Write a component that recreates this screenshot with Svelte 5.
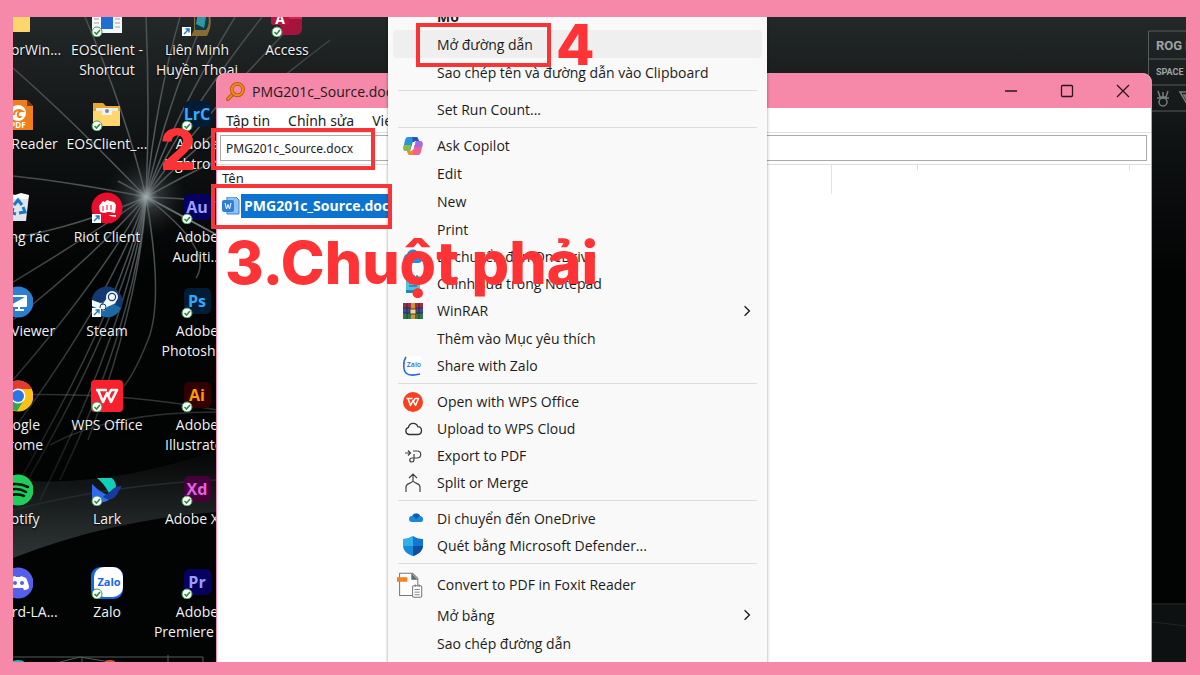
<script>
  const shortcuts = [
    { icon: 'folder', lines: ['MonitorWin...'] },
    { icon: 'page', lines: ['EOSClient -', 'Shortcut'], badge: 'check' },
    { icon: 'league', lines: ['Liên Minh', 'Huyền Thoại'], badge: 'arrow' },
    { icon: 'access', lines: ['Access'], badge: 'check' },
    { icon: 'foxit', lines: ['Foxit Reader'] },
    { icon: 'folderFile', lines: ['EOSClient_...'], badge: 'check' },
    { icon: 'adobe', text: 'LrC', bg: '#001d35', fg: '#3fa9ff', lines: ['Adobe', 'Lightroo...'], badge: 'check' },
    null,
    { icon: 'bin', lines: ['Thùng rác'] },
    { icon: 'riot', lines: ['Riot Client'], badge: 'arrow' },
    { icon: 'adobe', text: 'Au', bg: '#06005e', fg: '#9c9cff', lines: ['Adobe', 'Auditi...'], badge: 'check' },
    null,
    { icon: 'viewer', lines: ['UltraViewer'] },
    { icon: 'steam', lines: ['Steam'], badge: 'arrow' },
    { icon: 'adobe', text: 'Ps', bg: '#001d35', fg: '#31a8ff', lines: ['Adobe', 'Photoshop'], badge: 'check' },
    null,
    { icon: 'chrome', lines: ['Google', 'Chrome'] },
    { icon: 'wps', lines: ['WPS Office'], badge: 'check' },
    { icon: 'adobe', text: 'Ai', bg: '#320000', fg: '#ff9a00', lines: ['Adobe', 'Illustrator'], badge: 'check' },
    null,
    { icon: 'spotify', lines: ['Spotify'] },
    { icon: 'lark', lines: ['Lark'], badge: 'check' },
    { icon: 'adobe', text: 'Xd', bg: '#45023a', fg: '#ea5de8', lines: ['Adobe XD'], badge: 'check' },
    null,
    { icon: 'discord', lines: ['Discord-LA...'] },
    { icon: 'zalo', lines: ['Zalo'], badge: 'check' },
    { icon: 'adobe', text: 'Pr', bg: '#06005e', fg: '#9c9cff', lines: ['Adobe', 'Premiere Pro'], badge: 'check' },
    null
  ];

  const menu = [
    [
      { label: 'Mở', bold: true },
      { label: 'Mở đường dẫn', active: true },
      { label: 'Sao chép tên và đường dẫn vào Clipboard' }
    ],
    [{ label: 'Set Run Count...' }],
    [
      { label: 'Ask Copilot', icon: 'copilot' },
      { label: 'Edit' },
      { label: 'New' },
      { label: 'Print' },
      { label: 'Di chuyển đến OneDrive', icon: 'onedrive' },
      { label: 'Chỉnh sửa trong Notepad', icon: 'notepad' },
      { label: 'WinRAR', icon: 'winrar', more: true },
      { label: 'Thêm vào Mục yêu thích' },
      { label: 'Share with Zalo', icon: 'zaloShare' }
    ],
    [
      { label: 'Open with WPS Office', icon: 'wpsRound' },
      { label: 'Upload to WPS Cloud', icon: 'cloud' },
      { label: 'Export to PDF', icon: 'export' },
      { label: 'Split or Merge', icon: 'split' }
    ],
    [
      { label: 'Di chuyển đến OneDrive', icon: 'drive' },
      { label: 'Quét bằng Microsoft Defender...', icon: 'shield' }
    ],
    [
      { label: 'Convert to PDF in Foxit Reader', icon: 'convert', tall: true },
      { label: 'Mở bằng', more: true },
      { label: 'Sao chép đường dẫn' }
    ]
  ];

  const rays = [
    [13, 68, 70, 118], [13, 176, 70, 182], [13, 238, 80, 226], [13, 282, 80, 242],
    [13, 320, 90, 260], [13, 380, 100, 280], [13, 430, 110, 300], [20, 480, 118, 310],
    [13, 505, 124, 320], [40, 500, 130, 320], [60, 480, 136, 320], [88, 440, 140, 300],
    [85, 17, 125, 110], [146, 17, 150, 110], [180, 17, 156, 100], [205, 17, 165, 110],
    [235, 17, 172, 120], [262, 17, 178, 125], [300, 17, 190, 130], [330, 40, 200, 140],
    [217, 160, 180, 178], [217, 202, 180, 198], [217, 235, 180, 215]
  ];

  let query = $state('PMG201c_Source.docx');
</script>

{#snippet picture(s)}
  <svg class="pic" viewBox="0 0 32 32" aria-hidden="true">
    {#if s.icon === 'adobe'}
      <rect x="3" y="2" width="27" height="26" rx="5" fill={s.bg} />
      <text x="16" y="21" text-anchor="middle" font-family="Open Sans, sans-serif" font-weight="700" font-size="16" fill={s.fg}>{s.text}</text>
    {:else if s.icon === 'folder' || s.icon === 'folderFile'}
      <path d="M2 4h10l3 3h14v20H2z" fill="#e5a92c" />
      {#if s.icon === 'folderFile'}
        <path d="M5 9h22v6H5z" fill="#e9eef2" />
      {/if}
      <path d="M2 12h27v13a2 2 0 0 1-2 2H4a2 2 0 0 1-2-2z" fill="#ffd66e" />
      {#if s.icon === 'folderFile'}<path d="M11 9h10v7H11z" fill="#eef1f3" /><circle cx="16" cy="12" r="2" fill="#7b8c9b" />{/if}
    {:else if s.icon === 'page'}
      <path d="M1 2h30v26H1z" fill="#f4f6f8" />
      <path d="M10 2h12v22H10z" fill="#1f6fd0" />
      <path d="M3 14h5M3 18h5M24 14h5M24 18h5M24 22h5" stroke="#9aa4ae" />
    {:else if s.icon === 'league'}
      <path d="M3 2h20c9 6 8 20 3 29H10l3-6V6z" fill="#8a6a35" />
      <path d="M14 4h9c6 6 6 15 2 21H14z" fill="#0c3a46" />
      <path d="M17 8l8 4-2 11-8-4z" fill="#2e9aa0" />
    {:else if s.icon === 'access'}
      <path d="M8 0h23v24a6 6 0 0 1-6 6H10z" fill="#a4143c" />
      <path d="M12 0h19v14H12z" fill="#d0254f" />
      <rect x="0" y="3" width="18" height="17" rx="2" fill="#b3173f" />
      <text x="9" y="19" text-anchor="middle" font-family="Open Sans, sans-serif" font-weight="700" font-size="14" fill="#fff">A</text>
    {:else if s.icon === 'foxit'}
      <path d="M0 1h26l6 6v24H0z" fill="#f07f1b" />
      <path d="M26 1v6h6z" fill="#7b3b0c" />
      <circle cx="17" cy="14" r="8" fill="#fff" />
      <path d="M13 16c0-5 5-6 8-4-3 0-5 2-4 5 1 2 3 1 3 0" fill="none" stroke="#f07f1b" stroke-width="2" />
      <text x="17" y="29" text-anchor="middle" font-family="Open Sans, sans-serif" font-weight="700" font-size="8" fill="#fff">PDF</text>
    {:else if s.icon === 'bin'}
      <path d="M3 3h25l-3 26H6z" fill="#dfe6ea" />
      <path d="M3 3l6-2 5 2 6-2 8 2-1 4H4z" fill="#fbfdfe" />
      <path d="M13 13l4-5 4 5M22 15l2 5-6 1M15 22l-4-1 1-5" fill="none" stroke="#1878c9" stroke-width="3" />
    {:else if s.icon === 'riot'}
      <circle cx="16" cy="16" r="15.500" fill="#e90f2c" />
      <path d="M8 14l4-5 2 1 2-2 3 1 4 1 2 3-1 8-5-1h-2l-4 1-4-1zM18 23l7 0v2l-6-1z" fill="#fff" />
      <path d="M12 14v5M16 13v5M20 13v5" stroke="#e90f2c" />
    {:else if s.icon === 'viewer'}
      <circle cx="17" cy="16" r="15.500" fill="#2c7ed3" />
      <rect x="8" y="9" width="18" height="12" rx="1" fill="#fff" />
      <path d="M10 11h14l-14 8z" fill="#2c7ed3" />
      <path d="M14 24h9M18 21v3" stroke="#fff" stroke-width="2" />
    {:else if s.icon === 'steam'}
      <circle cx="16" cy="16" r="15.500" fill="#123a70" />
      <path d="M1 20a15.500 15.500 0 0 0 29 2L16 14z" fill="#1c6aa4" />
      <path d="M1 14l11 4 5-8 8 7-9 4-3 4-12-5z" fill="#f5f8fa" />
      <circle cx="21" cy="11" r="6" fill="#f5f8fa" /><circle cx="21" cy="11" r="4.200" fill="#123a70" /><circle cx="21" cy="11" r="3" fill="#f5f8fa" />
      <circle cx="12" cy="21" r="3" fill="none" stroke="#123a70" />
    {:else if s.icon === 'chrome'}
      <circle cx="17" cy="16" r="15.500" fill="#fbc116" />
      <path d="M17 16L4 8A15.500 15.500 0 0 1 31 9H17z" fill="#e33b2e" />
      <path d="M4 8a15.500 15.500 0 0 0 12 23l7-11-12-1z" fill="#2da94f" />
      <circle cx="17" cy="16" r="7.500" fill="#fff" /><circle cx="17" cy="16" r="6" fill="#2a74e6" />
    {:else if s.icon === 'wps'}
      <rect x="0" y="0" width="32" height="32" rx="4" fill="#f8202c" />
      <path d="M5 10h11M7 10l5 12 4-9 4 9 6-12h-6l-3 6" fill="none" stroke="#fff" stroke-width="2.600" stroke-linejoin="round" />
    {:else if s.icon === 'spotify'}
      <circle cx="17" cy="16" r="15.500" fill="#1ed05b" />
      <path d="M8 11c7-2 13-1 19 2M9 16c6-2 11-1 16 2M10 21c5-1 9-1 13 1" fill="none" stroke="#0b1a10" stroke-width="2.600" stroke-linecap="round" />
    {:else if s.icon === 'lark'}
      <path d="M6 4h15c3 3 4 6 4 9l-7 6C15 13 11 8 6 4z" fill="#10cfb8" />
      <path d="M1 10c7 7 13 11 20 12-5 8-14 8-20 3z" fill="#2f6bf2" />
      <path d="M14 21c5-1 7-9 17-9-4 5-4 10-10 13-3 1-6 0-9-2z" fill="#173a9c" />
    {:else if s.icon === 'discord'}
      <circle cx="17" cy="16" r="15.500" fill="#5560ea" />
      <path d="M9 11l5-2 1 1h4l1-1 5 2c2 4 3 7 3 10-2 2-4 2-5 2l-1-2h-10l-1 2c-1 0-3 0-5-2 0-3 1-6 3-10z" fill="#fff" />
      <circle cx="14" cy="16" r="2" fill="#5560ea" /><circle cx="21" cy="16" r="2" fill="#5560ea" />
    {:else if s.icon === 'zalo'}
      <rect x="0" y="0" width="32" height="32" rx="9" fill="#1566ee" />
      <rect x="3" y="0" width="29" height="30" rx="10" fill="#fff" />
      <text x="18" y="19" text-anchor="middle" font-family="Open Sans, sans-serif" font-weight="700" font-size="11" fill="#1566ee">Zalo</text>
    {/if}
    {#if s.badge === 'check'}
      <circle cx="6" cy="27" r="5" fill="#fff" stroke="#3b9b50" />
      <path d="M3.500 27l2 2 3.500-4" fill="none" stroke="#2c8d41" stroke-width="1.600" />
    {:else if s.badge === 'arrow'}
      <rect x="1" y="22" width="9" height="9" fill="#fff" />
      <path d="M3 29l5-5M4.500 24H8v3.500" fill="none" stroke="#1677c8" stroke-width="1.400" />
    {/if}
  </svg>
{/snippet}

{#snippet glyph(name)}
  <svg class="glyph" class:big={name === 'convert'} viewBox="0 0 20 20" aria-hidden="true">
    {#if name === 'copilot'}
      <path d="M5 1h8c2 0 2 2 3 4h-4c-2 0-2 1-3 4l-2 6H3c-3 0-3-3-2-6l1-5c1-2 1-3 3-3z" fill="#2795db" />
      <path d="M1 9h7l-1 6H3c-3 0-3-3-2-6z" fill="#8dbb3d" />
      <path d="M15 19H7c-2 0-2-2-3-4h4c2 0 2-1 3-4l2-6h4c3 0 3 3 2 6l-1 5c-1 2-1 3-3 3z" fill="#ee6397" />
      <path d="M13 5h4c3 0 3 3 2 6h-8z" fill="#a46ae4" />
      <path d="M4 15h4c1 0 2-1 2-2v6H7c-2 0-2-2-3-4z" fill="#f38936" />
      <path d="M9 1h4c2 0 2 2 3 4h-4l-2 2z" fill="#2355c4" />
      <path d="M10 6h2l-2 8H8z" fill="#fff" />
    {:else if name === 'onedrive'}
      <path d="M3 16a5 5 0 0 1 1-9c2-6 10-6 12 0 5 1 5 8 0 9z" fill="#1c8fe8" />
    {:else if name === 'notepad'}
      <rect x="3" y="2" width="14" height="17" rx="1" fill="#50c0e4" />
      <path d="M3 16h14v3H3z" fill="#2388b4" /><path d="M6 9h8M6 12h8" stroke="#155a80" /><path d="M5 1v3M8 1v3M11 1v3M14 1v3" stroke="#34495a" />
    {:else if name === 'winrar'}
      <path d="M0 2h20v5H0z" fill="#973044" /><path d="M0 7h20v5H0z" fill="#3a4aa5" /><path d="M0 12h20v6H0z" fill="#2d7b48" />
      <path d="M8 2h4v16H8z" fill="#d89232" /><rect x="7" y="8" width="6" height="5" fill="#e8d9a8" stroke="#5c3b17" />
      <path d="M0 7h7M0 12h7M13 7h7M13 12h7M4 2v16M16 2v16" stroke="#29212b" stroke-width="0.700" />
    {:else if name === 'zaloShare'}
      <path d="M3 1C0 5 0 14 3 17s10 2 14 1" fill="none" stroke="#2465eb" stroke-width="1.600" />
      <rect x="3" y="0" width="17" height="17" rx="5" fill="#fff" />
      <text x="11" y="11" text-anchor="middle" font-family="Open Sans, sans-serif" font-weight="600" font-size="7" fill="#2465eb">Zalo</text>
    {:else if name === 'wpsRound'}
      <circle cx="10" cy="10" r="10" fill="#f7401f" />
      <path d="M3.500 6.500h6M5 6.500l2.500 7L10 8.500l2.500 5 3-7H12l-2 4" fill="none" stroke="#fff" stroke-width="1.500" stroke-linejoin="round" />
    {:else if name === 'cloud'}
      <path d="M6 15.500a3.700 3.700 0 0 1-.5-7.200c1-5 8-5 9.200-.6 5 .2 5 7.500.3 7.800z" fill="none" stroke="#333" stroke-width="1.300" />
    {:else if name === 'export'}
      <path d="M2 7h5M5 4.500L7.500 7 5 9.500M10 5h4c5 0 5 7 0 7H9c-3 0-3 4 0 4 2 0 2-1 2-3V8" fill="none" stroke="#444" stroke-width="1.200" />
    {:else if name === 'split'}
      <path d="M10 1v7M6 5l4-4 4 4M3 19v-5c0-4 5-3 7-6 2 3 7 2 7 6v5" fill="none" stroke="#444" stroke-width="1.200" />
    {:else if name === 'drive'}
      <path d="M9 13a3 3 0 0 1 0-6c2-4 7-3 8 0 4 0 4 6 1 6z" fill="#1a86e0" /><path d="M10 7c2-3 6-3 7 0l-4 3z" fill="#0d5bb5" />
    {:else if name === 'shield'}
      <path d="M10 0c3 2 6 3 10 3v6c0 6-4 9-10 11z" fill="#1277cd" />
      <path d="M10 0C7 2 4 3 0 3v6c0 6 4 9 10 11z" fill="#168bdc" />
      <path d="M10 0C7 2 4 3 0 3v7h10z" fill="#30afe9" /><path d="M10 10h10c-1 5-4 8-10 10z" fill="#0e4d9f" />
    {:else if name === 'convert'}
      <path d="M2 1h10l4 4v13H2z" fill="#fff" stroke="#777" stroke-width="0.800" />
      <path d="M11 1v5h5z" fill="#5d6b66" /><path d="M0 4h8v3.500H0z" fill="#f58220" />
      <rect x="12" y="10.500" width="7" height="9" rx="1" fill="#fff" stroke="#777" stroke-width="0.800" /><path d="M13.500 13.500h4M13.500 15.500h4M13.500 17.500h4M14 9.500v2M17 9.500v2" stroke="#777" stroke-width="0.700" />
    {/if}
  </svg>
{/snippet}

<main class="frame">
  <div class="desktop">
    <svg class="wallpaper" viewBox="13 17 1174 645" preserveAspectRatio="xMinYMin slice" aria-hidden="true">
      <defs>
        <linearGradient id="sky" x1="0" y1="0" x2="0" y2="1">
          <stop offset="0" stop-color="#232829" /><stop offset="0.200" stop-color="#0f1213" /><stop offset="0.400" stop-color="#020303" /><stop offset="1" stop-color="#020303" />
        </linearGradient>
        <radialGradient id="core"><stop offset="0" stop-color="#a5b0b2" /><stop offset="0.300" stop-color="#525b5d" stop-opacity="0.500" /><stop offset="1" stop-color="#222" stop-opacity="0" /></radialGradient>
        <linearGradient id="arc" x1="0" y1="0" x2="0" y2="1"><stop offset="0" stop-color="#050606" /><stop offset="1" stop-color="#3a4243" /></linearGradient>
        <radialGradient id="fade" gradientUnits="userSpaceOnUse" cx="146" cy="197" r="320"><stop offset="0" stop-color="#8d989a" stop-opacity="0.600" /><stop offset="0.600" stop-color="#8d989a" stop-opacity="0.350" /><stop offset="1" stop-color="#8d989a" stop-opacity="0.100" /></radialGradient>
      </defs>
      <rect x="13" y="17" width="1174" height="645" fill="url(#sky)" />
      <path d="M13 480Q110 488 217 450V512Q110 520 13 558z" fill="url(#arc)" opacity="0.800" />
      <g fill="none" stroke="url(#fade)" stroke-width="1.500">
        {#each rays as [x, y, cx, cy]}
          <path d="M146 197Q{cx} {cy} {x} {y}" />
        {/each}
        <path d="M146 197Q164 300 148 340T120 390M146 197Q215 250 196 278M13 395Q120 392 217 410M50 445Q110 412 217 412M13 510Q110 485 217 480M118 181L217 235" />
      </g>
      <circle cx="146" cy="197" r="42" fill="url(#core)" />
      <g fill="none" stroke="#555c5d">
        <path d="M13 657H203V662M82 657v5M168 655v7M60 662L80 657L110 662" />
        <path d="M1187 31H1148.500V111H1187M1148 59H1187M1148 85H1187" />
        <path d="M1152 604H1187M1152 622L1187 626" stroke="#2c3132" />
      </g>
      <path d="M1152 605H1187V662H1152z" fill="#171b1c" opacity="0.600" />
      <ellipse cx="18" cy="662" rx="6" ry="2" fill="#1fb5b9" /><ellipse cx="110" cy="662" rx="5" ry="2" fill="#d9552a" />
      <g fill="#9fa3a3" font-family="Roboto, sans-serif" font-weight="700">
        <text x="1156" y="50" font-size="13">ROG</text><text x="1185" y="50" font-size="13">I</text>
        <text x="1156" y="75" font-size="9">SPACE</text>
      </g>
      <g fill="none" stroke="#777c7c" stroke-width="1.500">
        <circle cx="1163" cy="102" r="4" /><path d="M1158 91l2 6h6l2-6M1157 98h12M1163 92v6M1180 92h14l-7 12zM1184 95h6l-3 5z" />
      </g>
    </svg>

    <nav class="icons" aria-label="Desktop">
      {#each shortcuts as s}
        {#if s}
          <button class="shortcut">
            {@render picture(s)}
            <span>{#each s.lines as line}<span class="line">{line}</span>{/each}</span>
          </button>
        {:else}
          <span></span>
        {/if}
      {/each}
    </nav>

    <section class="window">
      <header class="titlebar">
        <svg class="logo" viewBox="0 0 20 20" aria-hidden="true">
          <path d="M8 12l-6 6" stroke="#b95a0c" stroke-width="4" stroke-linecap="round" /><path d="M8 12l-6 6" stroke="#f58a1c" stroke-width="2" stroke-linecap="round" />
          <circle cx="12" cy="8" r="6" fill="none" stroke="#b95a0c" stroke-width="4" /><circle cx="12" cy="8" r="6" fill="none" stroke="#f58a1c" stroke-width="2" />
        </svg>
        <h1>PMG201c_Source.docx - Everything</h1>
        <div class="controls">
          <button aria-label="Minimize"><svg viewBox="0 0 14 14"><path d="M1 7h12" /></svg></button>
          <button aria-label="Maximize"><svg viewBox="0 0 14 14"><rect x="1.500" y="1.500" width="11" height="11" rx="1" /></svg></button>
          <button aria-label="Close"><svg viewBox="0 0 14 14"><path d="M1 1l12 12M13 1L1 13" /></svg></button>
        </div>
      </header>
      <nav class="menubar">
        <button>Tập tin</button><button>Chỉnh sửa</button><button>View</button>
      </nav>
      <div class="search"><input type="text" aria-label="Search" bind:value={query} /></div>
      <table>
        <colgroup><col /><col class="c2" /><col class="c3" /><col class="c4" /></colgroup>
        <thead><tr><th>Tên</th><th class="short" aria-label="Path"></th><th class="short" aria-label="Size"></th><th aria-label="Date"></th></tr></thead>
        <tbody>
          <tr>
            <td colspan="4">
              <div class="file">
                <svg viewBox="0 0 18 18" aria-hidden="true"><path d="M5 0h9l3 3v14H5z" fill="#8fc3f5" stroke="#3d86cf" /><rect x="0" y="3" width="12" height="12" rx="2" fill="#2f7fd6" /><path d="M3 6l1.500 6L6 7.500 7.500 12 9 6" fill="none" stroke="#fff" /></svg>
                <strong>PMG201c_Source.docx</strong>
              </div>
            </td>
          </tr>
        </tbody>
      </table>
    </section>

    <div class="context" role="menu">
      {#each menu as group, g}
        {#if g}<hr />{/if}
        {#each group as item}
          <button role="menuitem" class:active={item.active} class:bold={item.bold} class:with-icon={item.icon} class:tall={item.tall}>
            <span class="slot">{#if item.icon}{@render glyph(item.icon)}{/if}</span>
            <span class="text">{item.label}</span>
            {#if item.more}<svg class="more" viewBox="0 0 10 10" aria-hidden="true"><path d="M3 1l4 4-4 4" /></svg>{/if}
          </button>
        {/each}
      {/each}
    </div>

    <div class="mark box-search"></div>
    <div class="mark box-file"></div>
    <div class="mark box-open"></div>
    <b class="step step-2">2</b>
    <b class="step step-3">3.Chuột phải</b>
    <b class="step step-4">4</b>
  </div>
</main>

<style>
  :global(body) { margin: 0; }
  * { box-sizing: border-box; }
  button { padding: 0; border: 0; background: none; font: inherit; color: inherit; cursor: default; }
  svg { display: block; flex: none; }

  .frame {
    display: flex;
    height: 100vh;
    padding: 17px 14px 13px 13px;
    background: #f688a9;
    font-family: "Open Sans", "Noto Sans", sans-serif;
    font-size: 14px;
    color: #1c1c1c;
  }
  .desktop { position: relative; flex: 1; min-width: 0; overflow: hidden; background: #020303; }
  .wallpaper { position: absolute; inset: 0; width: 100%; height: 100%; }

  .icons {
    position: relative;
    display: grid;
    grid-template-columns: repeat(4, 90px);
    grid-template-rows: repeat(7, minmax(0, 1fr));
    height: calc(100% + 11px);
    margin: -12px 0 0 -41px;
  }
  .shortcut {
    display: flex;
    flex-direction: column;
    align-items: center;
    gap: 3px;
    color: #f2f2f2;
    line-height: 20px;
    white-space: nowrap;
    text-shadow: 0 1px 2px #000;
  }
  .pic { width: 32px; height: 32px; text-shadow: none; }
  .line { display: block; }

  .window {
    position: absolute;
    top: 56px;
    right: 34px;
    bottom: -2px;
    left: 203px;
    overflow: hidden;
    border: 1px solid #f688a9;
    border-radius: 9px 9px 0 0;
    background: #fff;
    font-family: "Noto Sans", sans-serif;
    font-size: 13px;
  }
  .titlebar { display: flex; align-items: center; height: 34px; padding-left: 9px; background: #f688a9; font-family: "Open Sans", sans-serif; }
  .logo { width: 19px; height: 19px; }
  h1 { flex: 1; margin: 0 0 0 7px; font-size: 14px; font-weight: 400; }
  .controls { display: flex; }
  .controls button { display: grid; place-items: center; width: 56px; height: 34px; }
  .controls svg { width: 14px; height: 14px; fill: none; stroke: #2b141c; stroke-width: 1.3; }
  .menubar { display: flex; gap: 18px; height: 25px; padding-left: 9px; border-bottom: 1px solid #e2e2e2; font-size: 14px; line-height: 26px; }
  .search { padding: 2px 4px 3px 3px; border-bottom: 1px solid #ddd; }
  input { display: block; width: 100%; height: 26px; padding: 0 5px; border: 1px solid #aaa; border-radius: 0; background: #fff; font: inherit; font-size: 12px; color: inherit; outline: 0; }
  table { width: 100%; border-collapse: collapse; table-layout: fixed; }
  .c2 { width: 87px; }
  .c3 { width: 212px; }
  .c4 { width: 21px; }
  th { height: 29px; padding: 0 5px 3px; border-right: 1px solid #e2e2e2; font-weight: 400; text-align: left; }
  th.short, th:last-child { border: 0; }
  th.short { background: linear-gradient(#ddd, #ddd) right top / 1px 5px no-repeat; }
  td { padding: 0 0 0 5px; }
  .file { display: flex; align-items: center; gap: 1px; }
  .file svg { width: 18px; height: 18px; }
  strong { padding: 0 3px; background: #0c74d0; color: #fff; font-family: "Open Sans", sans-serif; font-size: 14px; line-height: 24px; }

  .context {
    position: absolute;
    top: -15px;
    left: 375px;
    width: 379px;
    padding: 0 5px 40px;
    background: #f9f9f9;
    box-shadow: 0 0 3px #0006;
  }
  .context button { display: flex; align-items: center; width: 100%; height: 28px; border-radius: 4px; text-align: left; }
  .context .with-icon { height: 27px; }
  .context .tall { height: 33px; }
  .context .active { background: #efefef; }
  .context .bold { font-weight: 700; }
  .slot { display: flex; justify-content: flex-end; width: 30px; margin-right: 14px; }
  .glyph { width: 20px; height: 20px; }
  .glyph.big { width: 26px; height: 26px; }
  .text { flex: 1; white-space: nowrap; }
  .more { width: 12px; height: 12px; margin-right: 9px; fill: none; stroke: #222; stroke-width: 1.2; }
  hr { height: 1px; margin: 4px 5px; border: 0; background: #dcdcdc; }

  .mark { position: absolute; border: 4px solid #f93437; }
  .box-search { top: 111px; left: 198px; width: 164px; height: 42px; }
  .box-file { top: 167px; left: 198px; width: 181px; height: 45px; }
  .box-open { top: 6px; left: 403px; width: 135px; height: 44px; }
  .step { position: absolute; color: #fd3336; font-family: Inter, sans-serif; font-size: 56px; font-weight: 800; line-height: 60px; white-space: nowrap; }
  .step-2 { top: 103px; left: 147px; }
  .step-3 { top: 216px; left: 212px; font-size: 59px; }
  .step-4 { top: -2px; left: 543px; }
</style>
